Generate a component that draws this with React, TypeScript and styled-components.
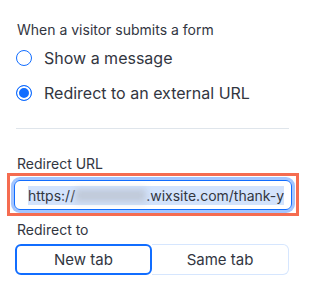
import React, { useState } from 'react';
import styled, { createGlobalStyle } from 'styled-components';

const GlobalStyle = createGlobalStyle`
  body {
    margin: 0;
    background: #fff;
    font-family: Inter, 'Noto Sans', sans-serif;
    color: #32363f;
  }
`;

const Panel = styled.div`
  width: 305px;
  padding: 21px 16px 0 16px;
  box-sizing: border-box;
`;

const Heading = styled.div`
  font-size: 14px;
  line-height: 18px;
  margin-left: 1px;
`;

const RadioList = styled.div`
  display: flex;
  flex-direction: column;
  gap: 19px;
  margin-top: 11px;
`;

const RadioRow = styled.label`
  display: flex;
  align-items: center;
  gap: 12px;
  font-size: 16px;
  line-height: 16px;
  cursor: pointer;
`;

const RadioDot = styled.span<{ $checked: boolean }>`
  width: 16px;
  height: 16px;
  box-sizing: border-box;
  border-radius: 50%;
  border: 1px solid #116dff;
  background: ${(p) => (p.$checked ? '#116dff' : '#fff')};
  box-shadow: ${(p) => (p.$checked ? 'inset 0 0 0 2px #fff' : 'none')};
  flex-shrink: 0;
`;

const Divider = styled.hr`
  border: none;
  border-top: 1px solid #dfe5eb;
  margin: 27px 0 0 0;
`;

const Label = styled.div<{ $top: number }>`
  font-size: 14px;
  line-height: 18px;
  margin: ${(p) => p.$top}px 0 0 1px;
`;

const Highlight = styled.div`
  margin: 0 -10px 0 -9px;
  border: 3px solid #f56c50;
  padding: 4px 4px 3px 4px;
`;

const Input = styled.div`
  height: 30px;
  box-sizing: border-box;
  border: 1px solid #116dff;
  border-radius: 6px;
  box-shadow: 0 0 0 3px #a3c5ff;
  display: flex;
  align-items: center;
  padding: 0 8px 0 13px;
  overflow: hidden;
  white-space: nowrap;
  font-size: 14px;
`;

const Selected = styled.span`
  background: #d3e3fc;
  line-height: 19px;
  display: inline-flex;
  align-items: center;
`;

const Blurred = styled.span`
  display: inline-block;
  width: 71px;
  height: 13px;
  background: #bcc4d1;
  filter: blur(3px);
  opacity: 0.8;
`;

const Segments = styled.div`
  display: grid;
  grid-template-columns: 1fr 1fr;
  margin: 5px 0 0 -1px;
  height: 31px;
`;

const Segment = styled.button<{ $active: boolean }>`
  font-family: inherit;
  font-size: 15px;
  color: #32363f;
  background: #fff;
  cursor: pointer;
  box-sizing: border-box;
  border: ${(p) => (p.$active ? '2px solid #116dff' : '1px solid #d6e6fe')};
  border-radius: ${(p) => (p.$active ? '6px' : '0 6px 6px 0')};
  border-left: ${(p) => (p.$active ? '2px solid #116dff' : 'none')};
`;

const App: React.FC = () => {
  const [mode, setMode] = useState('redirect');
  const [tab, setTab] = useState('new');
  return (
    <Panel>
      <GlobalStyle />
      <Heading>When a visitor submits a form</Heading>
      <RadioList>
        <RadioRow onClick={() => setMode('message')}>
          <RadioDot $checked={mode === 'message'} />
          Show a message
        </RadioRow>
        <RadioRow onClick={() => setMode('redirect')}>
          <RadioDot $checked={mode === 'redirect'} />
          Redirect to an external URL
        </RadioRow>
      </RadioList>
      <Divider />
      <Label $top={26}>Redirect URL</Label>
      <Highlight>
        <Input>
          <Selected>
            https://
            <Blurred />
            .wixsite.com/thank-y
          </Selected>
        </Input>
      </Highlight>
      <Label $top={5}>Redirect to</Label>
      <Segments>
        <Segment $active={tab === 'new'} onClick={() => setTab('new')}>
          New tab
        </Segment>
        <Segment $active={tab === 'same'} onClick={() => setTab('same')}>
          Same tab
        </Segment>
      </Segments>
    </Panel>
  );
};

export default App;
